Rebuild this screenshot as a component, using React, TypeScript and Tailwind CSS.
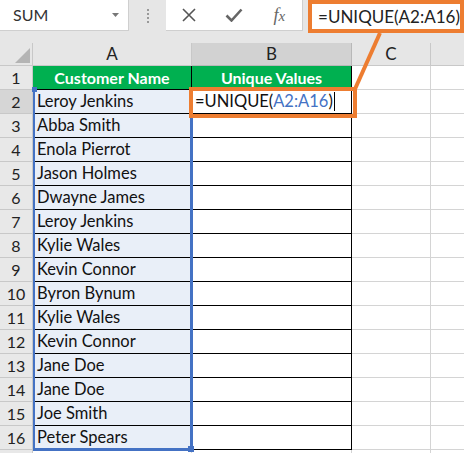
import React from 'react';

const names = [
  'Leroy Jenkins',
  'Abba Smith',
  'Enola Pierrot',
  'Jason Holmes',
  'Dwayne James',
  'Leroy Jenkins',
  'Kylie Wales',
  'Kevin Connor',
  'Byron Bynum',
  'Kylie Wales',
  'Kevin Connor',
  'Jane Doe',
  'Jane Doe',
  'Joe Smith',
  'Peter Spears',
];

const font = { fontFamily: 'Lato, "Open Sans", sans-serif' };

const RowHead = ({ n, active }: { n?: number; active?: boolean }) => (
  <div
    className={`w-[33px] shrink-0 flex items-center justify-center border-r border-b border-[#c8c8c8] text-[16px] text-[#222] ${
      active ? 'bg-[#d6d6d6]' : 'bg-[#e8e8e8]'
    }`}
  >
    {n}
  </div>
);

const Toolbar = () => (
  <div className="flex h-[43px] bg-[#e6e6e6] items-start">
    <div className="w-[132px] h-[31px] bg-white flex items-center pl-[13px] pr-[8px] border-r border-b border-[#cfcfcf]">
      <span className="text-[16px] text-[#333] flex-1">SUM</span>
      <svg width="9" height="6" viewBox="0 0 9 6">
        <path d="M1 1h7L4.5 5z" fill="#777" />
      </svg>
    </div>
    <div className="w-[38px] h-[31px] flex flex-col items-center justify-center gap-[2px]">
      <span className="w-[2px] h-[2px] bg-[#999]" />
      <span className="w-[2px] h-[2px] bg-[#999]" />
      <span className="w-[2px] h-[2px] bg-[#999]" />
      <span className="w-[2px] h-[2px] bg-[#999]" />
    </div>
    <div className="w-[137px] h-[31px] bg-white border-b border-r border-[#cfcfcf] flex items-center">
      <div className="w-[46px] flex justify-center">
        <svg width="16" height="16" viewBox="0 0 16 16">
          <path d="M2 2l12 12M14 2L2 14" stroke="#555" strokeWidth="1.6" />
        </svg>
      </div>
      <div className="w-[46px] flex justify-center">
        <svg width="18" height="14" viewBox="0 0 18 14">
          <path d="M1.5 7.5l5 5L16.5 1.5" stroke="#666" strokeWidth="2.6" fill="none" />
        </svg>
      </div>
      <div
        className="w-[46px] flex justify-center text-[18px] italic text-[#666]"
        style={{ fontFamily: '"Liberation Serif", serif' }}
      >
        <span>
          f<span className="text-[15px]">x</span>
        </span>
      </div>
    </div>
    <div className="flex-1 h-[33px] ml-[5px] bg-white border-[4px] border-[#ed7d31] flex items-center pl-[6px]">
      <span className="text-[17px] text-[#222]">=UNIQUE(A2:A16)</span>
    </div>
  </div>
);

const ColHeaders = () => (
  <div className="flex h-[23px]">
    <div className="w-[33px] shrink-0 bg-[#e6e6e6] border-r border-b border-[#c8c8c8] relative">
      <svg className="absolute right-[2px] bottom-[2px]" width="15" height="15" viewBox="0 0 15 15">
        <path d="M15 0V15H0z" fill="#b4b4b4" />
      </svg>
    </div>
    <div className="w-[159px] shrink-0 bg-[#e6e6e6] border-r border-b border-[#c8c8c8] flex items-center justify-center text-[17px] text-[#222]">
      A
    </div>
    <div className="w-[160px] shrink-0 bg-[#d2d2d2] border-r border-b border-[#b8b8b8] flex items-center justify-center text-[17px] text-[#222]">
      B
    </div>
    <div className="w-[79px] shrink-0 bg-[#e6e6e6] border-r border-b border-[#c8c8c8] flex items-center justify-center text-[17px] text-[#222]">
      C
    </div>
    <div className="flex-1 bg-[#e6e6e6] border-b border-[#c8c8c8]" />
  </div>
);

export default function App() {
  return (
    <div className="relative w-[464px] h-[453px] overflow-hidden bg-white" style={font}>
      <Toolbar />
      <ColHeaders />

      <div className="flex flex-col">
        <div className="flex h-[24px]">
          <RowHead n={1} />
          <div className="w-[159px] shrink-0 bg-[#00b050] border-r border-b border-black flex items-center justify-center text-white font-bold text-[16px]">
            Customer Name
          </div>
          <div className="w-[160px] shrink-0 bg-[#00b050] border-r border-b border-black flex items-center justify-center text-white font-bold text-[16px]">
            Unique Values
          </div>
          <div className="w-[79px] shrink-0 border-r border-b border-[#d4d4d4]" />
          <div className="flex-1 border-b border-[#d4d4d4]" />
        </div>

        {names.map((name, i) => (
          <div key={i} className="flex h-[24px]">
            <RowHead n={i + 2} active={i === 0} />
            <div className="w-[159px] shrink-0 bg-[#e9eff8] border-r border-b border-black flex items-center pl-[4px] text-[16.5px] text-[#111]">
              {name}
            </div>
            <div className="w-[160px] shrink-0 border-r border-b border-black flex items-center pl-[3px] text-[16.5px] text-[#111]">
              {i === 0 && (
                <>
                  =UNIQUE(<span className="text-[#4472c4]">A2:A16</span>)
                  <span className="w-[1px] h-[19px] bg-black ml-[1px]" />
                </>
              )}
            </div>
            <div className="w-[79px] shrink-0 border-r border-b border-[#d4d4d4]" />
            <div className="flex-1 border-b border-[#d4d4d4]" />
          </div>
        ))}
        <div className="flex h-[24px]">
          <RowHead />
          <div className="w-[159px] shrink-0 border-r border-[#d4d4d4]" />
          <div className="w-[160px] shrink-0 border-r border-[#d4d4d4]" />
          <div className="w-[79px] shrink-0 border-r border-[#d4d4d4]" />
        </div>
      </div>

      {/* range highlight A2:A16 */}
      <div className="absolute left-[33px] top-[90px] w-[160px] h-[361px] border-l-2 border-r-[3px] border-b-[3px] border-[#4472c4] pointer-events-none">
        <span className="absolute -left-[3px] -top-[3px] w-[5px] h-[5px] bg-[#4472c4]" />
        <span className="absolute -right-[4px] -bottom-[4px] w-[6px] h-[6px] bg-[#4472c4]" />
      </div>

      {/* callout box on B2 */}
      <div className="absolute left-[189px] top-[87px] w-[168px] h-[31px] border-[4px] border-[#ed7d31] pointer-events-none" />

      {/* connector */}
      <svg className="absolute left-0 top-0 pointer-events-none" width="464" height="453">
        <path d="M380 33L355 89" stroke="#ed7d31" strokeWidth="4" />
      </svg>
    </div>
  );
}
